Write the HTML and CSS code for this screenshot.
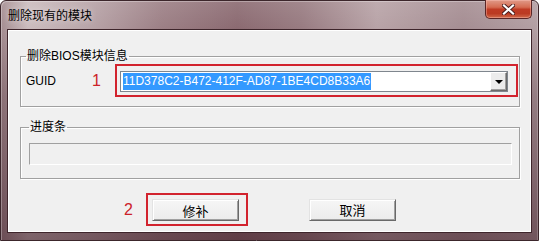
FILE: index.html
```html
<!DOCTYPE html>
<html lang="zh-CN">
<head>
<meta charset="utf-8">
<title>删除现有的模块</title>
<link rel="stylesheet" href="styles.css">
</head>
<body>
<div class="window">
  <div class="titlebar">
    <span class="title">删除现有的模块</span>
    <button class="close" aria-label="关闭">
      <svg width="13" height="11" viewBox="0 0 13 11">
        <path d="M2 1.5 L11 9.5 M11 1.5 L2 9.5" stroke="#4a1c1c" stroke-width="4" stroke-linecap="square" fill="none"/>
        <path d="M2 1.5 L11 9.5 M11 1.5 L2 9.5" stroke="#ffffff" stroke-width="2.2" stroke-linecap="square" fill="none"/>
      </svg>
    </button>
  </div>
  <div class="client">
    <fieldset class="group group-info">
      <legend class="legend">删除BIOS模块信息</legend>
      <div class="row">
        <span class="label">GUID</span>
        <span class="mark mark-1">1</span>
        <div class="highlight highlight-combo">
          <div class="combo">
            <div class="combo-text"><span class="selected">11D378C2-B472-412F-AD87-1BE4CD8B33A6</span></div>
            <div class="combo-btn"><span class="arrow"></span></div>
          </div>
        </div>
      </div>
    </fieldset>
    <fieldset class="group group-progress">
      <legend class="legend">进度条</legend>
      <div class="progress"></div>
    </fieldset>
    <div class="actions">
      <span class="mark mark-2">2</span>
      <div class="highlight highlight-btn">
        <button class="btn">修补</button>
      </div>
      <button class="btn btn-cancel">取消</button>
    </div>
  </div>
</div>
</body>
</html>
```
FILE: styles.css
```css
* { box-sizing: border-box; }
html, body { margin: 0; padding: 0; }
body {
  width: 539px;
  height: 241px;
  overflow: hidden;
  font-family: "Liberation Sans", "Noto Sans CJK SC", sans-serif;
  font-size: 12px;
  color: #000;
}
.window {
  width: 539px;
  height: 241px;
  display: flex;
  flex-direction: column;
  border: 1px solid #3c262b;
  border-radius: 6px 6px 0 0;
  background:
    linear-gradient(180deg, rgba(255,255,255,0.1) 0%, rgba(255,255,255,0) 12%, rgba(60,25,35,0.25) 40%, rgba(60,25,35,0.55) 100%),
    linear-gradient(90deg, #a48c90 0%, #cbbcbe 5%, #b9a5a9 16%, #9c7f85 30%, #8b6a71 44%, #987b81 56%, #b8a3a7 70%, #a58d92 86%, #b39fa3 100%);
  box-shadow: inset 1px 1px 0 rgba(255,255,255,0.3), inset -1px 0 0 rgba(255,255,255,0.2);
}
.titlebar {
  height: 28px;
  display: flex;
  align-items: flex-start;
  justify-content: space-between;
  flex: none;
}
.title {
  font-family: "Noto Sans CJK SC", sans-serif;
  font-size: 12px;
  line-height: 14px;
  margin: 7px 0 0 7px;
  color: #000;
  text-shadow: 0 0 6px rgba(255,255,255,0.6);
}
.close {
  width: 47px;
  height: 19px;
  margin: -1px 6px 0 0;
  padding: 0;
  display: flex;
  align-items: center;
  justify-content: center;
  border: 1px solid #5a2626;
  border-top: none;
  border-radius: 0 0 5px 5px;
  background: linear-gradient(180deg, #e09a88 0%, #d56c52 40%, #bf3b24 52%, #bb3a22 75%, #d06a4a 100%);
  box-shadow: inset 0 0 0 1px rgba(255,200,190,0.4);
}
.close svg { display: block; }
.client {
  flex: 1;
  margin: 0 6px 7px 6px;
  border: 1px solid #3e252b;
  box-shadow: inset 0 0 0 1px #ffffff;
  background: #f0f0f0;
  padding: 19px 11px 0 12px;
  display: flex;
  flex-direction: column;
}
.group {
  margin: 0;
  border: 1px solid #a0a0a0;
  box-shadow: 1px 1px 0 #ffffff, inset 1px 1px 0 #ffffff;
  min-width: 0;
}
.legend {
  font-family: "Liberation Sans", "Noto Sans CJK SC", sans-serif;
  font-size: 12px;
  line-height: 14px;
  padding: 0 1px;
  height: 14px;
}
.group-info {
  padding: 1px 1px 9px 5px;
}
.row {
  display: flex;
  align-items: center;
}
.label {
  width: 66px;
  font-size: 12px;
  flex: none;
}
.mark {
  color: #cc2229;
  font-family: "Liberation Sans", sans-serif;
  font-size: 16px;
  line-height: 18px;
  flex: none;
}
.mark-1 { width: 23px; padding-left: 0; }
.highlight {
  border: 2px solid #d2232e;
}
.highlight-combo {
  flex: 1;
  height: 33px;
  padding: 5px 8px 3px 3px;
}
.combo {
  height: 21px;
  border: 1px solid #7f868e;
  background: #fff;
  display: flex;
  align-items: stretch;
}
.combo-text {
  flex: 1;
  padding: 1px 0 1px 2px;
  display: flex;
}
.selected {
  background: #3399ff;
  color: #fff;
  font-size: 12px;
  line-height: 17px;
  height: 17px;
  padding: 0 1px 0 0;
}
.combo-btn {
  width: 17px;
  border: 1px solid;
  border-color: #ffffff #6b6b6b #6b6b6b #ffffff;
  background: #ececec;
  box-shadow: inset -1px -1px 0 #a0a0a0;
  display: flex;
  align-items: center;
  justify-content: center;
}
.arrow {
  width: 0;
  height: 0;
  border-left: 4px solid transparent;
  border-right: 4px solid transparent;
  border-top: 4px solid #000;
  margin-top: 1px;
}
.group-progress {
  margin-top: 13px;
  padding: 9px 7px 13px 8px;
}
.progress {
  height: 22px;
  border: 1px solid;
  border-color: #a0a0a0 #ffffff #ffffff #a0a0a0;
  background: #f0f0f0;
}
.actions {
  margin-top: 14px;
  padding-left: 104px;
  display: flex;
  align-items: center;
}
.mark-2 { width: 22px; }
.highlight-btn {
  padding: 4px 7px 3px 4px;
}
.btn {
  width: 87px;
  height: 22px;
  padding: 0;
  font-family: "Noto Sans CJK SC", sans-serif;
  font-size: 13px;
  line-height: 15px;
  color: #000;
  background: linear-gradient(180deg, #f6f6f6 0%, #ececec 100%);
  border: 1px solid;
  border-color: #e3e3e3 #696969 #696969 #e3e3e3;
  box-shadow: inset 1px 1px 0 #ffffff, inset -1px -1px 0 #a0a0a0;
  display: block;
}
.btn-cancel {
  margin-left: 61px;
}
```
